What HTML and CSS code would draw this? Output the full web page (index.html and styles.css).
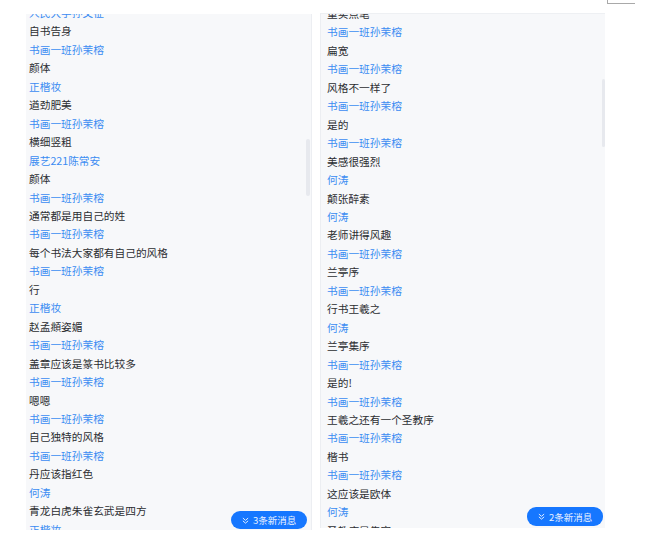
FILE: index.html
```html
<!DOCTYPE html>
<html lang="zh">
<head>
<meta charset="utf-8">
<title>chat</title>
<link rel="stylesheet" href="styles.css">
</head>
<body>
<div class="page">
  <div class="panel left">
    <div class="list">
      <div class="name">人民大学孙文征</div>
      <div class="msg">自书告身</div>
      <div class="name">书画一班孙茉榕</div>
      <div class="msg">颜体</div>
      <div class="name">正楷妆</div>
      <div class="msg">遒劲肥美</div>
      <div class="name">书画一班孙茉榕</div>
      <div class="msg">横细竖粗</div>
      <div class="name">展艺221陈常安</div>
      <div class="msg">颜体</div>
      <div class="name">书画一班孙茉榕</div>
      <div class="msg">通常都是用自己的姓</div>
      <div class="name">书画一班孙茉榕</div>
      <div class="msg">每个书法大家都有自己的风格</div>
      <div class="name">书画一班孙茉榕</div>
      <div class="msg">行</div>
      <div class="name">正楷妆</div>
      <div class="msg">赵孟頫姿媚</div>
      <div class="name">书画一班孙茉榕</div>
      <div class="msg">盖章应该是篆书比较多</div>
      <div class="name">书画一班孙茉榕</div>
      <div class="msg">嗯嗯</div>
      <div class="name">书画一班孙茉榕</div>
      <div class="msg">自己独特的风格</div>
      <div class="name">书画一班孙茉榕</div>
      <div class="msg">丹应该指红色</div>
      <div class="name">何涛</div>
      <div class="msg">青龙白虎朱雀玄武是四方</div>
      <div class="name">正楷妆</div>
    </div>
    <div class="thumb thumb-left"></div>
    <button class="newmsg newmsg-left"><svg class="chev" viewBox="0 0 8 8" width="7" height="7"><path d="M1 1.2 L4 3.8 L7 1.2 M1 4.4 L4 7 L7 4.4" fill="none" stroke="currentColor" stroke-width="1.1"/></svg><span>3条新消息</span></button>
  </div>
  <div class="panel right">
    <div class="list">
      <div class="msg">重实点笔</div>
      <div class="name">书画一班孙茉榕</div>
      <div class="msg">扁宽</div>
      <div class="name">书画一班孙茉榕</div>
      <div class="msg">风格不一样了</div>
      <div class="name">书画一班孙茉榕</div>
      <div class="msg">是的</div>
      <div class="name">书画一班孙茉榕</div>
      <div class="msg">美感很强烈</div>
      <div class="name">何涛</div>
      <div class="msg">颠张醉素</div>
      <div class="name">何涛</div>
      <div class="msg">老师讲得风趣</div>
      <div class="name">书画一班孙茉榕</div>
      <div class="msg">兰亭序</div>
      <div class="name">书画一班孙茉榕</div>
      <div class="msg">行书王羲之</div>
      <div class="name">何涛</div>
      <div class="msg">兰亭集序</div>
      <div class="name">书画一班孙茉榕</div>
      <div class="msg">是的!</div>
      <div class="name">书画一班孙茉榕</div>
      <div class="msg">王羲之还有一个圣教序</div>
      <div class="name">书画一班孙茉榕</div>
      <div class="msg">楷书</div>
      <div class="name">书画一班孙茉榕</div>
      <div class="msg">这应该是欧体</div>
      <div class="name">何涛</div>
      <div class="msg">圣教序是集字</div>
    </div>
    <div class="thumb thumb-right"></div>
    <button class="newmsg newmsg-right"><svg class="chev" viewBox="0 0 8 8" width="7" height="7"><path d="M1 1.2 L4 3.8 L7 1.2 M1 4.4 L4 7 L7 4.4" fill="none" stroke="currentColor" stroke-width="1.1"/></svg><span>2条新消息</span></button>
  </div>
  <div class="corner"></div>
</div>
</body>
</html>
```

FILE: styles.css
```css
html, body {
  margin: 0;
  padding: 0;
  background: #ffffff;
  font-family: "Noto Sans CJK SC", "Noto Sans", sans-serif;
}

.page {
  position: relative;
  display: flex;
  gap: 8px;
  padding: 14px 0 0 26px;
  height: 540px;
  box-sizing: border-box;
}

.panel {
  position: relative;
  height: 516px;
  background: #f7f8fa;
  overflow: hidden;
}

.left {
  width: 285px;
  border-right: 1px solid #eceef2;
}

.right {
  width: 284px;
  border-left: 1px solid #eceef2;
  border-top: 1px solid #eef0f3;
  height: 514px;
  margin-top: -1px;
}

.list {
  margin-top: -10px;
  display: flex;
  flex-direction: column;
}

.left .list {
  padding-left: 3px;
}

.right .list {
  padding-left: 6px;
  margin-top: -9px;
}

.name,
.msg {
  font-size: 10.7px;
  line-height: 18.46px;
  height: 18.46px;
  white-space: nowrap;
}

.name {
  color: #3b8cf2;
}

.msg {
  color: #2b2d31;
}

.thumb {
  position: absolute;
  background: #e7e9ee;
  border-radius: 2px;
}

.thumb-left {
  left: 280px;
  top: 125px;
  width: 4px;
  height: 57px;
}

.thumb-right {
  right: 0;
  top: 65px;
  width: 3px;
  height: 68px;
}

.newmsg {
  position: absolute;
  display: flex;
  align-items: center;
  gap: 4px;
  box-sizing: border-box;
  width: 76px;
  height: 18px;
  padding: 0 0 0 11px;
  border: none;
  border-radius: 9px;
  background: #1677ff;
  color: #e9f2ff;
  font-family: "Noto Sans CJK SC", sans-serif;
  font-size: 9.5px;
  line-height: 18px;
  cursor: pointer;
}

.newmsg .chev {
  flex: none;
}

.newmsg-left {
  right: 4px;
  bottom: 1px;
}

.newmsg-right {
  right: 2px;
  bottom: 2px;
  height: 19px;
}

.corner {
  position: absolute;
  left: 607px;
  top: 0;
  width: 27px;
  height: 3px;
  border-left: 1px solid #a9a9a9;
  border-bottom: 1px solid #a9a9a9;
}
```
